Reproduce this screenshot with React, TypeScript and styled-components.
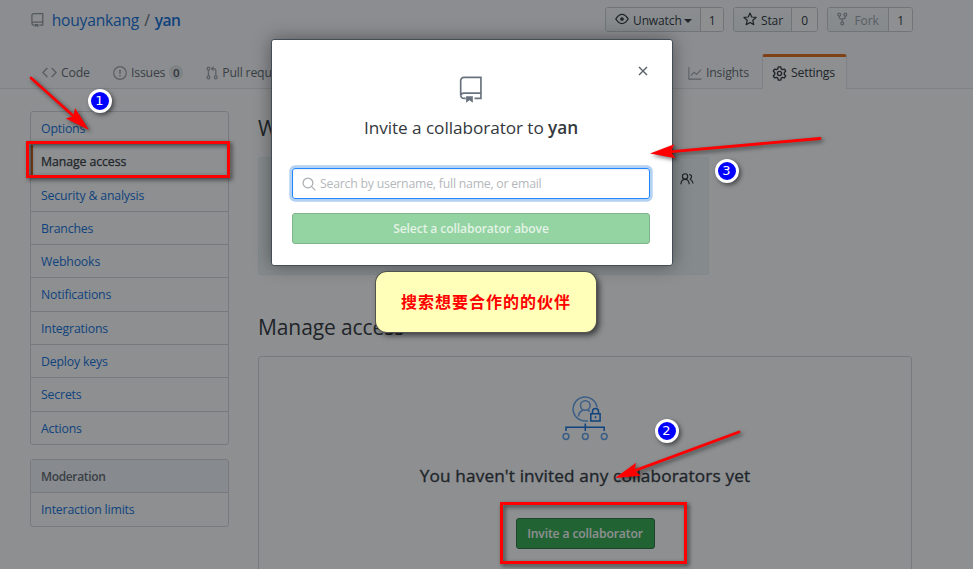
import React from 'react';
import styled, { createGlobalStyle, css } from 'styled-components';

const GlobalStyle = createGlobalStyle`
  *, *::before, *::after { box-sizing: border-box; }
  body {
    margin: 0;
    overflow: hidden;
    background: #fff;
    color: #24292e;
    font-family: "Open Sans", "Noto Sans", sans-serif;
    font-size: 12.3px;
    line-height: 18px;
  }
  h2, h3, p { margin: 0; font-weight: 400; }
  button { font: inherit; }
  svg { display: block; flex: none; }
`;

const Screen = styled.div`
  position: relative;
  width: 973px;
  height: 569px;
  overflow: hidden;
`;

/* ---------- Repository header ---------- */

const RepoHeader = styled.header`
  height: 89px;
  display: flex;
  flex-direction: column;
  justify-content: space-between;
  padding: 7px 60px 0 30px;
  background: #fafbfc;
  border-bottom: 1px solid #e1e4e8;
`;

const TitleRow = styled.div`
  display: flex;
  align-items: flex-start;
  justify-content: space-between;
`;

const RepoTitle = styled.div`
  display: flex;
  align-items: center;
  height: 26px;
  padding-left: 1px;
  color: #0366d6;
  font-size: 15.6px;
  letter-spacing: -0.2px;
`;

const OwnerName = styled.span`
  margin-left: 8px;
`;

const Slash = styled.span`
  margin: 0 5px;
  color: #586069;
`;

const RepoName = styled.span`
  font-weight: 600;
  letter-spacing: -0.5px;
`;

const Actions = styled.div`
  display: flex;
  gap: 9px;
`;

const ActionGroup = styled.div<{ $width: number; $count: number; $muted?: boolean }>`
  display: grid;
  grid-template-columns: 1fr ${(p) => p.$count}px;
  width: ${(p) => p.$width}px;
  height: 25px;
  border: 1px solid #c6cbd1;
  border-radius: 3px;
  overflow: hidden;
  color: ${(p) => (p.$muted ? '#959da5' : '#24292e')};
  font-size: 12px;
  line-height: 20px;
  letter-spacing: -0.12px;
`;

const ActionButton = styled.div`
  display: flex;
  align-items: center;
  gap: 4px;
  padding: 2px 0 0 9px;
  background: linear-gradient(#fafbfc, #eff3f6);
  border-right: 1px solid #c6cbd1;
  svg { margin-top: -4px; }
`;

const Caret = styled.i`
  margin-left: -2px;
  border: 4px solid transparent;
  border-top-color: currentColor;
  border-bottom: 0;
`;

const ActionCount = styled.div`
  display: flex;
  align-items: center;
  justify-content: center;
  padding-top: 2px;
  background: #fff;
  color: #24292e;
`;

const Tabs = styled.nav`
  display: flex;
  align-items: flex-end;
  margin-bottom: -1px;
`;

const Tab = styled.div<{ $width: number; $active?: boolean }>`
  display: flex;
  align-items: center;
  gap: 4px;
  width: ${(p) => p.$width}px;
  height: 34px;
  padding: 1px 0 0 12px;
  color: #586069;
  white-space: nowrap;
  letter-spacing: -0.2px;
  ${(p) =>
    p.$active &&
    css`
      height: 35px;
      padding: 0 0 0 9px;
      color: #24292e;
      background: #fff;
      border: 1px solid #e1e4e8;
      border-top: 3px solid #e36209;
      border-bottom: 0;
      border-radius: 3px 3px 0 0;
    `}
`;

const TabSpacer = styled.div`
  flex: 0 0 378px;
`;

const Counter = styled.span`
  min-width: 14px;
  padding: 0 3px;
  border-radius: 9px;
  background: rgba(27, 31, 35, 0.09);
  color: #444d56;
  font-size: 11.5px;
  font-weight: 600;
  line-height: 15px;
  text-align: center;
`;

/* ---------- Page body ---------- */

const Body = styled.div`
  display: grid;
  grid-template-columns: 199px 654px;
  column-gap: 29px;
  padding: 22px 0 0 30px;
`;

const Sidebar = styled.aside`
  display: flex;
  flex-direction: column;
  gap: 14px;
`;

const Menu = styled.nav`
  display: flex;
  flex-direction: column;
  border: 1px solid #d1d5da;
  border-radius: 3px;
  overflow: hidden;
`;

const MenuItem = styled.div<{ $selected?: boolean; $heading?: boolean }>`
  height: 33.3px;
  padding: 8px 10px 0;
  color: #0366d6;
  line-height: 17px;
  letter-spacing: -0.17px;
  & + & { border-top: 1px solid #d1d5da; }
  &:first-child { height: 32.3px; }
  ${(p) =>
    p.$selected &&
    css`
      color: #24292e;
      letter-spacing: -0.08px;
      -webkit-text-stroke: 0.25px currentColor;
      box-shadow: inset 2px 0 0 #e36209;
    `}
  ${(p) =>
    p.$heading &&
    css`
      background: #f3f5f8;
      color: #586069;
      font-size: 12px;
      font-weight: 600;
      letter-spacing: -0.35px;
    `}
`;

const Main = styled.main`
  display: flex;
  flex-direction: column;
`;

const SectionTitle = styled.h2`
  height: 36px;
  line-height: 34px;
  font-size: 21px;
  letter-spacing: -0.1px;
`;

const VisibilityPanel = styled.section`
  display: flex;
  justify-content: flex-end;
  width: 451px;
  height: 118px;
  margin: 10px 0 35px;
  padding: 14px 14px;
  background: #eff4f6;
  border: 1px solid #e8eef1;
  border-radius: 3px;
`;

const EmptyState = styled.section`
  display: flex;
  flex-direction: column;
  align-items: center;
  height: 260px;
  margin-top: 10px;
  padding-top: 39px;
  border: 1px solid #d1d5da;
  border-radius: 3px;
`;

const EmptyTitle = styled.h3`
  margin-top: 21px;
  font-size: 17.2px;
  line-height: 26px;
  letter-spacing: 0.14px;
  white-space: nowrap;
  -webkit-text-stroke: 0.35px currentColor;
`;

const PrimaryButton = styled.button`
  width: 139px;
  height: 31px;
  margin-top: 29px;
  padding: 0;
  background: #28a745;
  border: 1px solid #1c6b32;
  border-radius: 3px;
  color: #fff;
  font-size: 12.2px;
  font-weight: 600;
  letter-spacing: -0.15px;
`;

/* ---------- Dialog ---------- */

const Backdrop = styled.div`
  position: absolute;
  inset: 0;
  background: rgba(27, 31, 35, 0.5);
`;

const Dialog = styled.div`
  position: absolute;
  left: 271px;
  top: 39px;
  width: 402px;
  height: 227px;
  display: flex;
  flex-direction: column;
  align-items: center;
  padding: 36px 22px 0 20px;
  background: #fff;
  border: 1px solid #444d56;
  border-radius: 3px;
  box-shadow: 0 0 18px rgba(0, 0, 0, 0.4);
`;

const CloseButton = styled.button`
  position: absolute;
  top: 26px;
  right: 24px;
  padding: 0;
  border: 0;
  background: none;
  color: #586069;
`;

const DialogTitle = styled.p`
  height: 26px;
  margin-top: 12px;
  color: #33383d;
  font-size: 17.2px;
  line-height: 26px;
  letter-spacing: -0.06px;
  white-space: nowrap;
  b { font-weight: 600; }
`;

const SearchField = styled.div`
  display: flex;
  align-items: center;
  gap: 4px;
  width: 358px;
  height: 31px;
  margin-top: 27px;
  padding-left: 9px;
  border: 1px solid #2188ff;
  border-radius: 3px;
  box-shadow: inset 0 1px 2px rgba(27, 31, 35, 0.08), 0 0 0 2.7px rgba(3, 102, 214, 0.3);
  color: #b4b8bc;
  letter-spacing: -0.23px;
`;

const SubmitButton = styled.button`
  width: 358px;
  height: 31px;
  margin-top: 14px;
  padding: 0;
  background: #94d3a2;
  border: 1px solid #7db48b;
  border-radius: 3px;
  color: rgba(255, 255, 255, 0.75);
  font-size: 12.2px;
  font-weight: 600;
  letter-spacing: -0.14px;
`;

/* ---------- Annotations ---------- */

const Note = styled.div`
  position: absolute;
  left: 376px;
  top: 272px;
  width: 220px;
  height: 60px;
  display: flex;
  align-items: center;
  justify-content: center;
  background: #ffffb9;
  border-radius: 11px;
  box-shadow: 0 0 0 1px #55554f, 3px 3px 6px rgba(0, 0, 0, 0.65);
  color: #f00;
  font: 700 16px/24px "Noto Sans CJK SC", sans-serif;
  letter-spacing: 1px;
  padding-bottom: 2px;
`;

const Frame = styled.div<{ $x: number; $y: number; $w: number; $h: number }>`
  position: absolute;
  left: ${(p) => p.$x}px;
  top: ${(p) => p.$y}px;
  width: ${(p) => p.$w}px;
  height: ${(p) => p.$h}px;
  border: 3px solid #f00;
  filter: drop-shadow(2px 2px 2px rgba(0, 0, 0, 0.6));
`;

const StepBadge = styled.div<{ $x: number; $y: number }>`
  position: absolute;
  left: ${(p) => p.$x}px;
  top: ${(p) => p.$y}px;
  width: 24px;
  height: 24px;
  border: 3px solid #fff;
  border-radius: 50%;
  background: #00f;
  box-shadow: 2px 2px 4px rgba(0, 0, 0, 0.5);
  color: #fff;
  font: 400 13px/18px "DejaVu Sans", sans-serif;
  text-align: center;
`;

const ArrowLayer = styled.svg`
  position: absolute;
  inset: 0;
  pointer-events: none;
  filter: drop-shadow(2px 2px 2px rgba(0, 0, 0, 0.55));
`;

/* ---------- Icons ---------- */

interface IconProps {
  size?: number;
  width?: number;
  color?: string;
  stroke?: number;
  children?: React.ReactNode;
}

const Icon = ({ size = 14, width = 16, color = 'currentColor', stroke = 1.4, children }: IconProps) => (
  <svg
    width={(size * width) / 16}
    height={size}
    viewBox={`0 0 ${width} 16`}
    fill="none"
    stroke={color}
    strokeWidth={stroke}
  >
    {children}
  </svg>
);

const RepoIcon = (p: IconProps) => (
  <Icon width={14} {...p}>
    <path d="M4 13.3H2.9A1.9 1.9 0 0 1 1 11.4V2.7A1.9 1.9 0 0 1 2.9.8H13v12.5H9.2M1 11.6a1.9 1.9 0 0 1 1.9-1.5H13" />
    <path d="M4.2 12h4v3.8l-2-1.5-2 1.5z" fill={p.color || 'currentColor'} stroke="none" />
  </Icon>
);

const EyeIcon = () => (
  <Icon stroke={1.5}>
    <path d="M.9 8C3.5 3.9 5.8 2.8 8 2.8s4.5 1.1 7.1 5.2C12.5 12.1 10.2 13.2 8 13.2S3.5 12.1.9 8z" />
    <circle cx="8" cy="8" r="2.1" fill="currentColor" stroke="none" />
  </Icon>
);

const StarIcon = () => (
  <Icon>
    <path
      d="M8 1.2l2 4.5 4.9.5-3.7 3.3 1.1 4.9L8 11.9l-4.3 2.5 1.1-4.9L1.1 6.2 6 5.7z"
      strokeLinejoin="round"
    />
  </Icon>
);

const ForkIcon = () => (
  <Icon width={12}>
    <circle cx="2.5" cy="3" r="1.6" />
    <circle cx="9.5" cy="3" r="1.6" />
    <circle cx="6" cy="13" r="1.6" />
    <path d="M2.5 4.6v1.2c0 1.2.8 2 2 2h3c1.2 0 2-.8 2-2V4.6M6 7.8v3.6" />
  </Icon>
);

const CodeIcon = () => (
  <Icon size={15} color="#959da5" stroke={1.5}>
    <path d="M5.7 3.2L1 8l4.7 4.8M10.3 3.2L15 8l-4.7 4.8" />
  </Icon>
);

const IssueIcon = () => (
  <Icon color="#959da5">
    <circle cx="8" cy="8" r="7.2" />
    <path d="M8 4.2v4.6M8 10.3v1.7" strokeWidth="1.7" />
  </Icon>
);

const PullIcon = () => (
  <Icon width={14} color="#959da5">
    <circle cx="2.8" cy="3" r="1.6" />
    <circle cx="2.8" cy="13" r="1.6" />
    <circle cx="11.2" cy="13" r="1.6" />
    <path d="M2.8 4.6v6.8M11.2 11.4V5.2c0-1.4-.8-2.2-2.2-2.2H6.5M8.7.7L6.4 3l2.3 2.3" />
  </Icon>
);

const GraphIcon = () => (
  <Icon color="#959da5" stroke={1.2}>
    <path d="M1 1.5v13.5h14.5M3.3 11L7 7l2.7 2.6L15 4.2" />
  </Icon>
);

const GearIcon = () => (
  <Icon size={15} stroke={1.45}>
    <path
      d="M6.7 1h2.6l.5 2 1.5.9 2-.6 1.3 2.2-1.5 1.5v2l1.5 1.5-1.3 2.2-2-.6-1.5.9-.5 2H6.7l-.5-2-1.5-.9-2 .6-1.3-2.2L2.900 9V7L1.400 5.500l1.300-2.200 2 .6L6.200 3z"
      strokeLinejoin="round"
    />
    <circle cx="8" cy="8" r="2.2" />
  </Icon>
);

const PeopleIcon = () => (
  <Icon>
    <circle cx="5.8" cy="5" r="3" />
    <path d="M1 14c.2-3.6 2-5.7 4.8-5.7s4.6 2.1 4.8 5.7M10.5 3c1.9 0 2.7 1 2.7 2.3 0 1-.5 1.7-1.3 2.2v1c1.8.8 2.7 2.5 3 4.6" />
  </Icon>
);

const SearchIcon = () => (
  <Icon color="#a9adb1">
    <circle cx="6.8" cy="6.8" r="5.6" />
    <path d="M11 11l4.3 4.3" />
  </Icon>
);

const CloseIcon = () => (
  <svg width="10" height="10" viewBox="0 0 10 10" stroke="currentColor" strokeWidth="1.4">
    <path d="M1 1l8 8M9 1L1 9" />
  </svg>
);

const AccessIllustration = () => (
  <svg width="46" height="46" viewBox="0 0 46 46" fill="none" strokeWidth="1.5">
    <g stroke="#5a9deb">
      <path d="M35 11.5A12 12 0 1 0 26 24.7" />
      <circle cx="23.3" cy="9.5" r="4.8" />
      <path d="M16.5 20.5c0-3 1.6-5 4.3-6.2M25.8 14.3c1 .4 1.5.8 2 1.5" />
      <circle cx="4" cy="40.5" r="2.9" />
      <circle cx="23.3" cy="40.5" r="2.9" />
      <circle cx="42.2" cy="40.5" r="2.9" />
    </g>
    <g stroke="#0366d6">
      <path d="M28.8 17.7h9.3v7.3h-9.3zM30.5 17.5v-2a3 3 0 0 1 6 0v2M33.5 20.2v2" />
      <path d="M4 35V31.2h38.2V35M23.3 27.5v7.5" />
    </g>
  </svg>
);

interface ArrowProps {
  from: [number, number];
  to: [number, number];
  head?: number;
}

const Arrow = ({ from, to, head = 25 }: ArrowProps) => {
  const dx = to[0] - from[0];
  const dy = to[1] - from[1];
  const length = Math.hypot(dx, dy);
  const angle = (Math.atan2(dy, dx) * 180) / Math.PI;
  return (
    <g transform={`translate(${from[0]} ${from[1]}) rotate(${angle})`}>
      <path d={`M0 0H${length - head + 6}`} stroke="#f00" strokeWidth="2.8" strokeLinecap="round" />
      <path d={`M${length} 0L${length - head} -7L${length - head + 4} 0L${length - head} 7Z`} fill="#f00" />
    </g>
  );
};

const MENU = [
  'Options',
  'Manage access',
  'Security & analysis',
  'Branches',
  'Webhooks',
  'Notifications',
  'Integrations',
  'Deploy keys',
  'Secrets',
  'Actions',
];

export default function App() {
  return (
    <Screen>
      <GlobalStyle />
      <RepoHeader>
        <TitleRow>
          <RepoTitle>
            <RepoIcon size={14.5} color="#8b9299" />
            <OwnerName>houyankang</OwnerName>
            <Slash>/</Slash>
            <RepoName>yan</RepoName>
          </RepoTitle>
          <Actions>
            <ActionGroup $width={119} $count={22}>
              <ActionButton><EyeIcon />Unwatch<Caret /></ActionButton>
              <ActionCount>1</ActionCount>
            </ActionGroup>
            <ActionGroup $width={85} $count={25}>
              <ActionButton><StarIcon />Star</ActionButton>
              <ActionCount>0</ActionCount>
            </ActionGroup>
            <ActionGroup $width={86} $count={23} $muted>
              <ActionButton><ForkIcon />&nbsp;Fork</ActionButton>
              <ActionCount>1</ActionCount>
            </ActionGroup>
          </Actions>
        </TitleRow>
        <Tabs>
          <Tab $width={71}><CodeIcon />Code</Tab>
          <Tab $width={93}><IssueIcon />Issues<Counter>0</Counter></Tab>
          <Tab $width={104}><PullIcon />Pull requests</Tab>
          <TabSpacer />
          <Tab $width={86}><GraphIcon />Insights</Tab>
          <Tab $width={85} $active><GearIcon />Settings</Tab>
        </Tabs>
      </RepoHeader>

      <Body>
        <Sidebar>
          <Menu>
            {MENU.map((label) => (
              <MenuItem key={label} $selected={label === 'Manage access'}>{label}</MenuItem>
            ))}
          </Menu>
          <Menu>
            <MenuItem $heading>Moderation</MenuItem>
            <MenuItem>Interaction limits</MenuItem>
          </Menu>
        </Sidebar>
        <Main>
          <SectionTitle>Who has access</SectionTitle>
          <VisibilityPanel><PeopleIcon /></VisibilityPanel>
          <SectionTitle>Manage access</SectionTitle>
          <EmptyState>
            <AccessIllustration />
            <EmptyTitle>You haven't invited any collaborators yet</EmptyTitle>
            <PrimaryButton>Invite a collaborator</PrimaryButton>
          </EmptyState>
        </Main>
      </Body>

      <Backdrop />
      <Dialog>
        <CloseButton aria-label="Close"><CloseIcon /></CloseButton>
        <RepoIcon size={27} color="#6a737d" stroke={1} />
        <DialogTitle>Invite a collaborator to <b>yan</b></DialogTitle>
        <SearchField><SearchIcon />Search by username, full name, or email</SearchField>
        <SubmitButton>Select a collaborator above</SubmitButton>
      </Dialog>

      <Frame $x={26} $y={141} $w={204} $h={37} />
      <Frame $x={500} $y={502} $w={187} $h={62} />
      <ArrowLayer width="973" height="569">
        <Arrow from={[31, 78]} to={[89, 130]} />
        <Arrow from={[739, 432]} to={[615, 478]} />
        <Arrow from={[820, 138.5]} to={[650, 153.5]} />
      </ArrowLayer>
      <StepBadge $x={87.5} $y={88.5}>1</StepBadge>
      <StepBadge $x={654.5} $y={418.5}>2</StepBadge>
      <StepBadge $x={714.5} $y={158.5}>3</StepBadge>
      <Note>搜索想要合作的的伙伴</Note>
    </Screen>
  );
}
